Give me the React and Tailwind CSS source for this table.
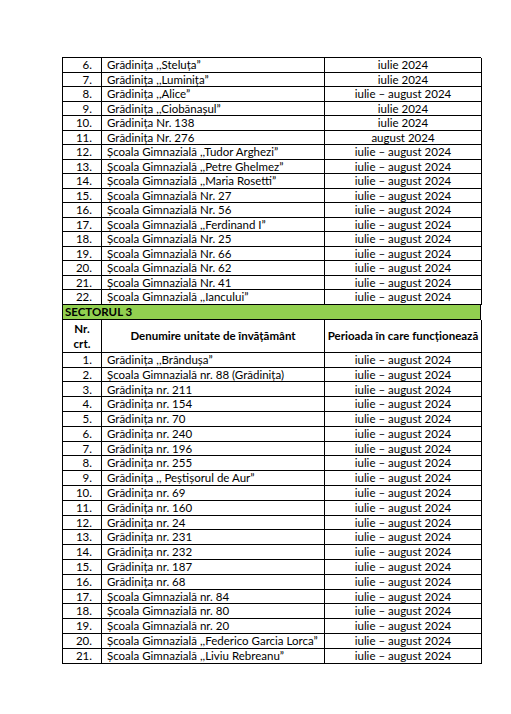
import React from "react";

const top = [
  ["6.", "Grădinița  ,,Steluța”", "iulie 2024"],
  ["7.", "Grădinița ,,Luminița”", "iulie 2024"],
  ["8.", "Grădinița ,,Alice”", "iulie – august 2024"],
  ["9.", "Grădinița ,,Ciobănașul”", "iulie 2024"],
  ["10.", "Grădinița Nr. 138", "iulie 2024"],
  ["11.", "Grădinița Nr. 276", "august 2024"],
  ["12.", "Școala Gimnazială ,,Tudor Arghezi”", "iulie – august 2024"],
  ["13.", "Școala Gimnazială ,,Petre Ghelmez”", "iulie – august 2024"],
  ["14.", "Școala Gimnazială ,,Maria Rosetti”", "iulie – august 2024"],
  ["15.", "Școala Gimnazială Nr. 27", "iulie – august 2024"],
  ["16.", "Școala Gimnazială Nr. 56", "iulie – august 2024"],
  ["17.", "Școala Gimnazială ,,Ferdinand I”", "iulie – august 2024"],
  ["18.", "Școala Gimnazială Nr. 25", "iulie – august 2024"],
  ["19.", "Școala Gimnazială Nr. 66", "iulie – august 2024"],
  ["20.", "Școala Gimnazială Nr. 62", "iulie – august 2024"],
  ["21.", "Școala Gimnazială Nr. 41", "iulie – august 2024"],
  ["22.", "Școala Gimnazială ,,Iancului”", "iulie – august 2024"],
];

const s3 = [
  "Grădinița ,,Brândușa”",
  "Școala Gimnazială nr. 88 (Grădinița)",
  "Grădinița nr. 211",
  "Grădinița nr. 154",
  "Grădinița nr. 70",
  "Grădinița nr. 240",
  "Grădinița nr. 196",
  "Grădinița nr. 255",
  "Grădinița ,, Peștișorul de Aur”",
  "Grădinița nr. 69",
  "Grădinița nr. 160",
  "Grădinița nr. 24",
  "Grădinița nr. 231",
  "Grădinița nr. 232",
  "Grădinița nr. 187",
  "Grădinița nr. 68",
  "Școala Gimnazială nr. 84",
  "Școala Gimnazială nr. 80",
  "Școala Gimnazială nr. 20",
  "Școala Gimnazială ,,Federico Garcia Lorca”",
  "Școala Gimnazială ,,Liviu Rebreanu”",
];

function Row({ n, name, date, h }) {
  return (
    <div className="grid grid-cols-[39px_223px_157px] leading-none" style={{ height: h }}>
      <div className="border-r border-b border-black flex items-center justify-end pr-[9px]">{n}</div>
      <div className="border-r border-b border-black flex items-center pl-[5px] whitespace-nowrap overflow-hidden">{name}</div>
      <div className="border-r border-b border-black flex items-center justify-center whitespace-nowrap">{date}</div>
    </div>
  );
}

export default function App() {
  return (
    <div className="w-[511px] h-[714px] bg-white text-black text-[11.5px]" style={{ fontFamily: "Lato, 'Open Sans', sans-serif" }}>
      <div className="pt-[57px] pl-[62px]">
        <div className="w-[419px] border-l border-t border-black">
          {top.map((r) => (
            <Row key={r[0]} n={r[0]} name={r[1]} date={r[2]} h="14.53px" />
          ))}
          <div className="h-[15px] bg-[#92d050] border-r border-b border-black flex items-center pl-[2px] font-bold leading-none">
            SECTORUL 3
          </div>
          <div className="grid grid-cols-[39px_223px_157px] h-[33px] font-bold leading-[15px]">
            <div className="border-r border-b border-black flex flex-col items-center justify-center">
              <span>Nr.</span>
              <span>crt.</span>
            </div>
            <div className="border-r border-b border-black flex items-center justify-center">Denumire unitate de învățământ</div>
            <div className="border-r border-b border-black flex items-center justify-center whitespace-nowrap">Perioada în care funcționează</div>
          </div>
          {s3.map((name, i) => (
            <Row key={i} n={`${i + 1}.`} name={name} date="iulie – august 2024" h="14.81px" />
          ))}
        </div>
      </div>
    </div>
  );
}
